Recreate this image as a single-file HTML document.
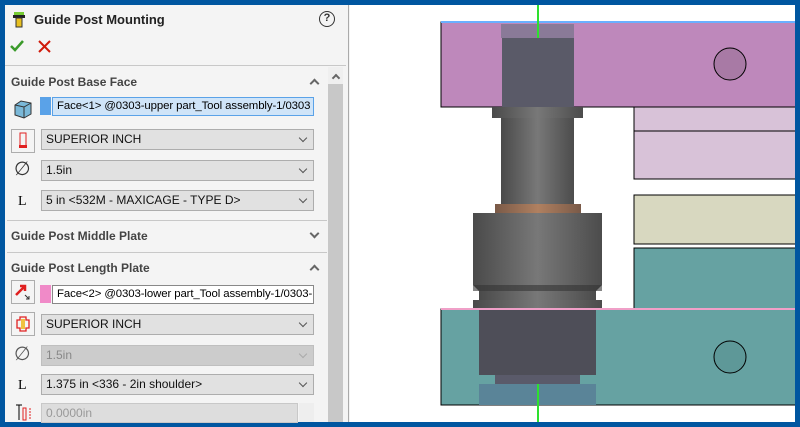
<!DOCTYPE html>
<html><head><style>
*{margin:0;padding:0;box-sizing:border-box}
body{width:800px;height:427px;background:#0056a0;position:relative;overflow:hidden;font-family:"Liberation Sans",sans-serif;font-size:12px;color:#000}
.a{position:absolute}
#panel{left:5px;top:5px;width:342px;height:417px;background:#f4f4f4}
.hdr{font-weight:bold;color:#444;font-size:12px}
.sel{position:absolute;height:21px;background:#e1e1e1;border:1px solid #adadad;font-size:12px;line-height:19px;padding-left:4px;color:#111}
.sel:after{content:"";position:absolute;right:7px;top:5px;width:5px;height:5px;border-right:1px solid #555;border-bottom:1px solid #555;transform:rotate(45deg)}
.sel.dis{background:#ccc;border-color:#bfbfbf;color:#888}
.sel.dis:after{border-color:#aaa}
.sep{position:absolute;left:2px;width:320px;height:1px;background:#c8c8c8}
.ib{position:absolute;width:24px;height:24px;border:1px solid #adadad;background:#f4f4f4}
.car{position:absolute;width:7px;height:7px;border-left:2px solid #666;border-top:2px solid #666;transform:rotate(45deg)}
.car.d{transform:rotate(225deg)}
.dia{position:absolute;left:9px;font-size:19px;color:#333;font-family:"DejaVu Sans",sans-serif;font-weight:200}
.inp{position:absolute;left:47px;width:262px;height:19px;line-height:17px;padding-left:4px;white-space:nowrap;overflow:hidden;font-size:11.4px;letter-spacing:-0.1px}
</style></head><body>
<div class="a" id="panel">
 <svg class="a" style="left:7px;top:7px" width="14" height="18"><rect x="2" y="0" width="10" height="4" fill="#7c3"/><rect x="1" y="3" width="12" height="3" fill="#222"/><rect x="4" y="6" width="6" height="9" fill="#e8c020" stroke="#333" stroke-width="1"/></svg>
 <div class="a" style="left:29px;top:7px;font-weight:bold;font-size:13px;color:#222">Guide Post Mounting</div>
 <div class="a" style="left:314px;top:6px;width:16px;height:16px;border:1.5px solid #333;border-radius:50%;font-size:11px;font-weight:bold;text-align:center;line-height:13px;color:#333">?</div>
 <svg class="a" style="left:5px;top:34px" width="14" height="14"><path d="M1 7 L5 11 L13 2" stroke="#3a9a2a" stroke-width="2.5" fill="none"/></svg>
 <svg class="a" style="left:33px;top:35px" width="13" height="13"><path d="M1 1L12 12M12 1L1 12" stroke="#d01a0a" stroke-width="2" fill="none"/></svg>
 <div class="a" style="left:0;top:60px;width:341px;height:1px;background:#c8c8c8"></div>
 <div class="a" style="left:323px;top:62px;width:15px;height:355px;background:#efefef"></div>
 <div class="a" style="left:323px;top:79px;width:15px;height:338px;background:#c8c8c8"></div>
 <div class="car" style="left:328px;top:70px;width:6px;height:6px"></div>
 <div class="a" style="left:342px;top:0;width:1px;height:417px;background:#999"></div>

 <div class="a hdr" style="left:6px;top:70px">Guide Post Base Face</div>
 <div class="car" style="left:306px;top:75px"></div>
 <svg class="a" style="left:8px;top:94px" width="20" height="20"><path d="M2 6 L8 2 L18 4 L18 15 L11 19 L2 16 Z" fill="#7ab8d8" stroke="#333"/><path d="M2 6 L11 8 L18 4 M11 8 L11 19" stroke="#333" fill="none"/></svg>
 <div class="a" style="left:35px;top:92px;width:11px;height:18px;background:#5aa2e8"></div>
 <div class="inp" style="top:92px;border:1px solid #5aa2e8;background:#cfe4f8">Face&lt;1&gt; @0303-upper part_Tool assembly-1/0303</div>
 <div class="ib" style="left:6px;top:124px"><svg width="22" height="22"><rect x="8" y="3" width="6" height="14" fill="none" stroke="#e02020"/><rect x="7" y="15" width="8" height="3" fill="#e02020"/></svg></div>
 <div class="sel" style="left:36px;top:124px;width:273px">SUPERIOR INCH</div>
 <div class="dia" style="top:153px">∅</div>
 <div class="sel" style="left:36px;top:155px;width:273px">1.5in</div>
 <div class="a" style="left:13px;top:189px;font-family:'Liberation Serif',serif;font-size:14px">L</div>
 <div class="sel" style="left:36px;top:185px;width:273px">5 in &lt;532M - MAXICAGE - TYPE D&gt;</div>
 <div class="sep" style="top:215px"></div>
 <div class="a hdr" style="left:6px;top:224px">Guide Post Middle Plate</div>
 <div class="car d" style="left:306px;top:225px"></div>
 <div class="sep" style="top:247px"></div>
 <div class="a hdr" style="left:6px;top:256px">Guide Post Length Plate</div>
 <div class="car" style="left:306px;top:261px"></div>
 <div class="ib" style="left:6px;top:275px"><svg width="22" height="22"><path d="M4 14 L13 5 M8 5 L13 5 L13 10" stroke="#e02020" stroke-width="2.5" fill="none"/><path d="M13 14 L17 18 M14 18 L17 18 L17 15" stroke="#333" stroke-width="1" fill="none"/></svg></div>
 <div class="a" style="left:35px;top:280px;width:11px;height:18px;background:#f08ac8"></div>
 <div class="inp" style="top:280px;border:1px solid #888;background:#fff">Face&lt;2&gt; @0303-lower part_Tool assembly-1/0303-</div>
 <div class="ib" style="left:6px;top:307px"><svg width="22" height="22"><path d="M5 7 L8 7 L8 4 L14 4 L14 7 L17 7 L17 15 L14 15 L14 18 L8 18 L8 15 L5 15 Z" fill="none" stroke="#e02020" stroke-width="1.3"/><rect x="9" y="6" width="4" height="10" fill="#f0c040"/></svg></div>
 <div class="sel" style="left:36px;top:309px;width:273px">SUPERIOR INCH</div>
 <div class="dia" style="top:338px;color:#555">∅</div>
 <div class="sel dis" style="left:36px;top:340px;width:273px">1.5in</div>
 <div class="a" style="left:13px;top:373px;font-family:'Liberation Serif',serif;font-size:14px">L</div>
 <div class="sel" style="left:36px;top:369px;width:273px">1.375 in &lt;336 - 2in shoulder&gt;</div>
 <svg class="a" style="left:8px;top:398px" width="22" height="19"><path d="M3 2 L9 2 M6 2 L6 17" stroke="#000"/><rect x="10" y="5" width="3" height="12" fill="none" stroke="#e02020"/><path d="M17 5 L17 17" stroke="#e02020" stroke-dasharray="2 1"/></svg>
 <div class="a" style="left:36px;top:398px;width:257px;height:20px;background:#ddd;border:1px solid #c8c8c8;color:#999;padding-left:4px;line-height:19px">0.0000in</div>
 <div class="a" style="left:294px;top:398px;width:15px;height:19px;background:#eee"></div>
</div>
<div class="a" style="left:347px;top:5px;width:3px;height:417px;background:#f4f4f4"></div>
<div class="a" style="left:348px;top:5px;width:1px;height:417px;background:#aaa"></div>
<div class="a" style="left:350px;top:5px;width:445px;height:417px;background:#fff;overflow:hidden">
<svg width="445" height="417" style="position:absolute;left:0;top:0">
 <g transform="translate(-350,-5)">
 <rect x="441" y="22" width="360" height="85" fill="#be88bb" stroke="#000"/>
 <rect x="441" y="21" width="360" height="2" fill="#6ab0ff"/>
 <rect x="634" y="107" width="170" height="24" fill="#d8c2d8" stroke="#000"/>
 <rect x="634" y="131" width="170" height="48" fill="#d8c2d8" stroke="#000"/>
 <rect x="634" y="195" width="170" height="49" fill="#d8d8c0" stroke="#000"/>
 <rect x="634" y="248" width="170" height="62" fill="#66a2a2" stroke="#000"/>
 <rect x="441" y="309" width="360" height="96" fill="#66a2a2" stroke="#000"/>
 <rect x="441" y="308" width="360" height="2" fill="#f0a0c8"/>
 <circle cx="730" cy="64" r="16" fill="#a87aa5" stroke="#000"/>
 <circle cx="730" cy="357" r="16" fill="#5e9898" stroke="#000"/>
 <defs><linearGradient id="g" x1="0" x2="1"><stop offset="0" stop-color="#4a4a4a"/><stop offset=".5" stop-color="#787878"/><stop offset="1" stop-color="#4c4c4c"/></linearGradient>
 <linearGradient id="b" x1="0" x2="1"><stop offset="0" stop-color="#7a5a48"/><stop offset=".5" stop-color="#b08060"/><stop offset="1" stop-color="#7a5a48"/></linearGradient></defs>
 <rect x="501" y="24" width="73" height="14" fill="#8a7a98"/>
 <rect x="502" y="38" width="72" height="69" fill="#5a5a68"/>
 <rect x="492" y="107" width="91" height="11" fill="url(#g)"/>
 <rect x="501" y="118" width="73" height="86" fill="url(#g)"/>
 <rect x="495" y="204" width="86" height="9" fill="url(#b)"/>
 <path d="M473 213 L602 213 L602 285 L596 291 L479 291 L473 285 Z" fill="url(#g)"/>
 <rect x="473" y="285" width="129" height="6" fill="#333" opacity=".6"/>
 <rect x="479" y="291" width="117" height="9" fill="url(#g)"/>
 <rect x="473" y="300" width="129" height="8" fill="url(#g)"/>
 <rect x="479" y="310" width="117" height="65" fill="#4e4e58"/>
 <rect x="495" y="375" width="85" height="9" fill="#5a5a6a"/>
 <rect x="479" y="384" width="117" height="21" fill="#5a8498"/>
 <rect x="537" y="5" width="2" height="33" fill="#2ee02e"/>
 <rect x="537" y="384" width="2" height="40" fill="#2ee02e"/>
 </g>
</svg>
</div>
</body></html>
